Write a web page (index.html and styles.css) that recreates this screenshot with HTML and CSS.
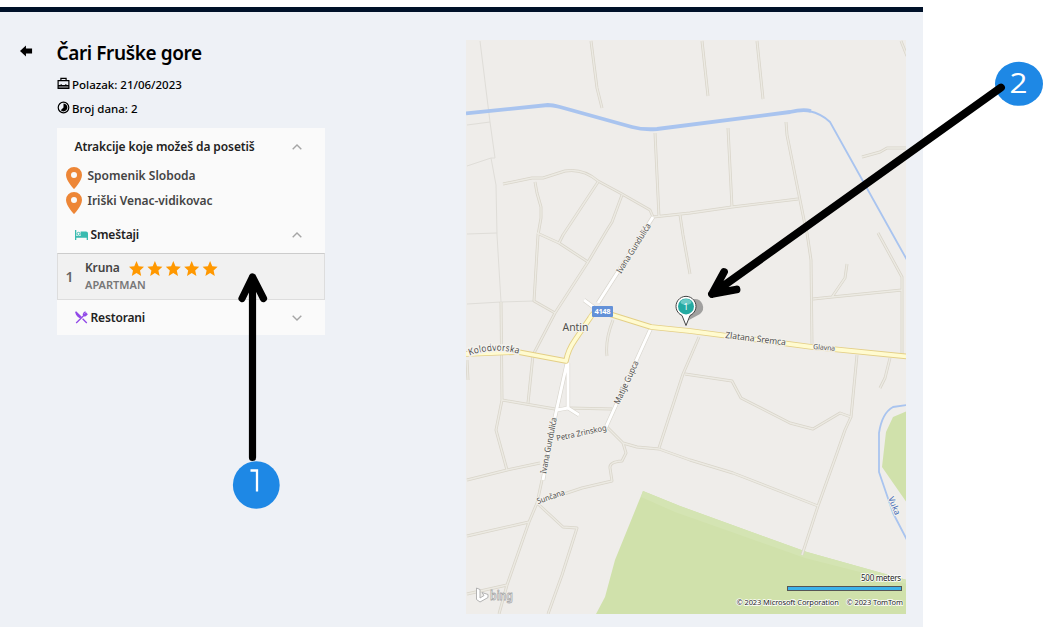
FILE: index.html
```html
<!DOCTYPE html>
<html lang="sr">
<head>
<meta charset="utf-8">
<title>Čari Fruške gore</title>
<link rel="stylesheet" href="styles.css">
</head>
<body>
<main class="app">
  <section class="trip">
    <svg class="back" viewBox="0 0 14 12"><path d="M0 6 6.4 0v3.4H13v5.2H6.4V12z"/></svg>
    <div class="details">
      <h1 class="title"><span class="fit-title">Čari Fruške gore</span></h1>
      <div class="meta">
        <svg class="meta-icon" viewBox="0 0 14 14"><path d="M4.2 4V1.4h5.6V4M1.2 4h11.6v8.3H1.2zM1.2 9.3h11.6M4.5 7.8v1.5M9.5 7.8v1.5" fill="none" stroke="#000" stroke-width="1.3"/><path d="M1 9h12v3H1z" opacity=".45"/></svg>
        <span class="departure">Polazak: 21/06/2023</span>
      </div>
      <div class="meta">
        <svg class="meta-icon" viewBox="0 0 14 14"><circle cx="7" cy="7" r="5.7" fill="none" stroke="#000" stroke-width="1.3"/><path d="M7 2.8a4.2 4.2 0 1 1-3 7.2L7 7z"/></svg>
        <span class="days">Broj dana: 2</span>
      </div>
      <div class="accordion">
        <div class="head head-first"><span class="attractions">Atrakcije koje možeš da posetiš</span><svg class="chev" viewBox="0 0 10 6"><path d="M.7 5.3 5 1l4.3 4.3"/></svg></div>
        <div class="place"><svg class="pin" viewBox="0 0 16 22"><path d="M8 0a8 8 0 0 0-8 8c0 6 8 14 8 14s8-8 8-14a8 8 0 0 0-8-8zm0 4.9a3 3 0 1 1 0 6 3 3 0 0 1 0-6z"/></svg><span class="place-a">Spomenik Sloboda</span></div>
        <div class="place"><svg class="pin" viewBox="0 0 16 22"><path d="M8 0a8 8 0 0 0-8 8c0 6 8 14 8 14s8-8 8-14a8 8 0 0 0-8-8zm0 4.9a3 3 0 1 1 0 6 3 3 0 0 1 0-6z"/></svg><span class="place-b">Iriški Venac-vidikovac</span></div>
        <div class="head head-stay">
          <svg class="head-icon" viewBox="0 0 13 10"><path d="M0 0h1.3v6H5.6V1.4H11a2 2 0 0 1 2 2V10h-1.3V7.8H1.3V10H0z" fill="#38bbb0"/><circle cx="3.5" cy="3.8" r="1.5" fill="none" stroke="#38bbb0"/></svg>
          <span class="stay">Smeštaji</span><svg class="chev" viewBox="0 0 10 6"><path d="M.7 5.3 5 1l4.3 4.3"/></svg></div>
        <div class="hotel">
          <span class="number">1</span>
          <div class="hotel-info">
            <div class="hotel-line"><span class="hotel-name">Kruna</span>
              <svg class="stars" viewBox="0 0 89 15"><defs><path id="star" d="M7.5 0 9.7 5.2 15 5.7 11 9.4 12.2 15 7.5 12 2.8 15 4 9.4 0 5.7 5.3 5.2z"/></defs><use href="#star"/><use href="#star" x="18.4"/><use href="#star" x="36.8"/><use href="#star" x="55.2"/><use href="#star" x="73.6"/></svg></div>
            <span class="hotel-type">APARTMAN</span>
          </div>
        </div>
        <div class="head head-food">
          <svg class="head-icon food" viewBox="0 0 13 13"><path d="M.7.8 6 6M7.6 7.7l4.2 4.3M1.2 12 8.8 4.5M8.2 2.8 10.5.6M9.2 4 11.5 1.7M10.2 5 12.4 2.8M8 3l2 2.2" fill="none" stroke="#9148e8" stroke-width="1.3"/><path d="M.5.5C0 3 2 6 5 7.3L6.6 6z" fill="#9148e8"/></svg>
          <span class="food-name">Restorani</span><svg class="chev" viewBox="0 0 10 6"><path d="M.7.7 5 5 9.3.7"/></svg></div>
      </div>
    </div>
  </section>
  <svg class="map" viewBox="466 40 440 574">
    <defs>
      <g id="lanes">
        <path d="M591 41 597 88 602 108M702 41 708 96M757 41 763 99M728 128 732 207M901 41 907 56M862 157 880 152 887 148H907"/>
        <path d="M786 122 787 135 799 195 805 225 807 233 811 260 812 345M655 133 659 217M653 217 690 213 732 207 798 199M680 215 683 235 690 274"/>
        <path d="M503 184 532 178 543 178 565 171Q583 168 598 181L622 194 650 210 653 217M535 182 537 193 541 207 541 218 538 235 534 301 555 313M598 182 563 235 559 243M622 195 612 222 607 230 588 262 555 313 533 355 528 403M537 233 559 243 588 262"/>
        <path d="M501 302 502 400 496 430 507 470M502 400 555 409M568 408 612 409M613 320Q605 340 607 356M467 360 468 380M878 233 902 277 902 355M813 299 832 297 902 290M832 297 845 278 847 264"/>
        <path d="M699 337 683 374 659 448M685 374 732 381 741 398 790 423 813 429 840 413 851 417M857 355 851 417 845 430 837 453 818 506 802 555M890 358 885 378 880 388"/>
        <path d="M607 427 617 437 623 443 637 447 659 449 690 460 733 473 818 506M623 443 626 453 622 461Q609 462 610 468L612 481 582 488 537 503 563 527 577 528 562 575 548 614M467 480 507 470 540 463M467 536 529 522M467 594 507 585M542 480 537 503 529 522 507 585 499 614"/>
      </g>
      <path id="streets" d="M653 217 598 303M584 300 596 309M651 328 606 427M567 363 555 417 543 480M568 363 568 408 579 415M557 410 568 408"/>
      <path id="highway" d="M466 354 518 352 566 361Q568 350 575 340L590 318Q595 309 603 312L651 327 690 331 812 347 907 356.5"/>
      <path id="kolodvorska" d="M469.5 355.5Q494 346.5 519 354"/>
    </defs>
    <rect x="466" y="40" width="441" height="574" fill="#efedea"/>
    <path d="M643 491 680 506 807 552 907 580V614H596L605 597 615 560zM907 411 893 417 886 432 882 467 907 503z" fill="#d0e1ab"/>
    <path d="M643 491 680 506 807 552 907 580V584L805 558 675 512 641 497z" fill="#d4e4b3"/>
    <path class="border" d="M480 41 490 122 495 158 491 158 496 185 497 235 501 302M467 125 490 122M467 166 491 158M467 234 497 233M467 304 501 302 534 301"/>
    <path class="river" d="M466 113.3 548 105Q552 105 560 107L632 127Q643 130 657 129L790 112Q803 109 811 111" stroke-width="3.8"/>
    <path class="river" d="M809 111Q822 114 830 122L893 235 907 260M907 405 893 407Q882 413 879 433V472L893 513 907 540" stroke-width="1.8"/>
    <use href="#lanes" class="lane-edge"/><use href="#lanes" class="lane-core"/>
    <use href="#streets" class="street-edge"/><use href="#streets" class="street-core"/>
    <use href="#highway" class="highway-edge"/><use href="#highway" class="highway-core"/>
    <g class="street-name">
      <text font-size="9.3" stroke-width="3"><textPath href="#kolodvorska" textLength="50" lengthAdjust="spacingAndGlyphs">Kolodvorska</textPath></text>
      <text transform="translate(621 274) rotate(-58)" textLength="57" lengthAdjust="spacingAndGlyphs" font-size="8.5">Ivana Gundulića</text>
      <text transform="translate(619 405) rotate(-65)" textLength="47" lengthAdjust="spacingAndGlyphs" font-size="8.5">Matije Gupca</text>
      <text transform="translate(546 474) rotate(-79)" textLength="57" lengthAdjust="spacingAndGlyphs" font-size="8.5">Ivana Gundulića</text>
      <text transform="translate(557 441) rotate(-12)" textLength="51" lengthAdjust="spacingAndGlyphs" font-size="8">Petra Zrinskog</text>
      <text transform="translate(538 504) rotate(-19)" textLength="29" lengthAdjust="spacingAndGlyphs" font-size="8">Sunčana</text>
      <text transform="translate(725 338) rotate(7)" textLength="61" lengthAdjust="spacingAndGlyphs" font-size="9">Zlatana Sremca</text>
      <text transform="translate(813 349) rotate(5)" textLength="22" lengthAdjust="spacingAndGlyphs" font-size="7.2">Glavna</text>
      <text x="562.5" y="330.5" textLength="26" lengthAdjust="spacingAndGlyphs" font-size="10">Antin</text>
      <text class="water-name" transform="translate(888 498) rotate(68)" textLength="19" lengthAdjust="spacingAndGlyphs" font-size="8.5">Vuka</text>
    </g>
    <rect x="592" y="306" width="21" height="11" rx="1" fill="#6391d8"/>
    <text x="594.5" y="314.3" textLength="16" font-size="7.5" font-weight="700" fill="#fff">4148</text>
    <path d="M689 320 700 314A8.5 8.5 0 0 0 694 299z" fill="#777" opacity=".65"/>
    <path d="M686 325.5 682 315.5A10 10 0 1 1 690 315.5z" fill="#fff" stroke="#444" stroke-width="1"/>
    <circle cx="686" cy="306.4" r="8" fill="#24aaa2"/><ellipse cx="686" cy="302" rx="5.5" ry="3" fill="#6bcac5"/>
    <text x="683.6" y="309.8" font-size="8.5" fill="#fff">1</text>
    <g fill="#fff" stroke="#aaa" stroke-width=".9"><path d="M476.5 588 480 589.5V598L484 595.5 482 592.5 488 594.5V597.5L480 602 476.5 599.5z"/><text x="490" y="599.5" textLength="23" lengthAdjust="spacingAndGlyphs" font-size="13" font-weight="600">bing</text></g>
    <g class="legal"><text x="861" y="580.5">500 meters</text><text x="736.5" y="604.5" class="owner">© 2023 Microsoft Corporation</text><text x="846.5" y="604.5" class="owner">© 2023 TomTom</text></g>
    <rect x="787.5" y="586.5" width="114" height="4" fill="#3bb2ea" stroke="#555"/>
  </svg>
</main>
<svg class="callouts" viewBox="0 0 1051 627">
  <ellipse cx="256.3" cy="485" rx="23.4" ry="23.7" fill="#1e88e5"/>
  <path d="M252.5 457.5V277M242 298.5 252.5 277 263.5 298.5" class="arrow"/>
  <path d="M250.5 470.5H257V491.5" fill="none" stroke="#fff" stroke-width="2.3"/>
  <ellipse cx="1019" cy="83.8" rx="24" ry="22" fill="#1e88e5"/>
  <path d="M1001 87.5 712 294M724 272 712 294 736.5 289.5" class="arrow arrow-wide"/>
  <text x="1009.5" y="93" textLength="18" lengthAdjust="spacingAndGlyphs" class="callout-number">2</text>
</svg>
</body>
</html>
```
FILE: styles.css
```css
* { box-sizing: border-box; }
body { margin: 0; width: 1051px; height: 627px; overflow: hidden; background: #fff; padding-top: 7px; font-family: "Noto Sans", "Open Sans", sans-serif; }
.app { display: flex; justify-content: space-between; width: 923px; height: 620px; padding: 28px 17px 13px 20px; background: #eef1f6; border-top: 5px solid #001129; }
.trip { display: flex; gap: 23.5px; }
.back { width: 13px; height: 12px; margin-top: 5px; }
.details { width: 268px; }
.title { margin: 0 0 6px; font-size: 19px; line-height: 26px; font-weight: 600; white-space: nowrap; }
.fit-title { letter-spacing: -.4px; }
.meta { display: flex; align-items: center; gap: 3px; height: 24px; font-size: 11.5px; font-weight: 500; white-space: nowrap; }
.meta-icon { width: 13px; height: 13px; margin-bottom: 1px; }
.departure, .days { margin-left: -.5px; }
.accordion { margin-top: 8px; height: 207px; background: #fafafa; color: #222; font-size: 12px; font-weight: 600; white-space: nowrap; }
.attractions { letter-spacing: -.1px; }
.place-b { letter-spacing: -.05px; }
.stay, .food-name { letter-spacing: -.15px; }
.head { display: flex; align-items: center; padding: 0 23px 0 18px; height: 36px; }
.head-first { height: 37.5px; }
.head-icon { width: 13px; height: 10px; margin-right: 3px; }
.food { height: 13px; }
.chev { width: 10px; height: 6px; margin-left: auto; fill: none; stroke: #a5a5a5; stroke-width: 1.4; }
.place { display: flex; align-items: flex-start; gap: 6px; height: 25.5px; padding: 1px 0 0 9px; line-height: 18px; color: #444; }
.pin { width: 16px; height: 22px; fill: #ed8637; }
.hotel { display: flex; align-items: center; gap: 12px; height: 47px; padding-left: 8px; background: #f1f1f1; border: 1px solid #ddd; border-top-color: #ccc; color: #444; }
.number { width: 8px; font-size: 14px; color: #666; }
.hotel-info { line-height: 16px; margin-left: -.5px; }
.hotel-line { display: flex; align-items: center; gap: 9px; height: 17px; }
.hotel-name { letter-spacing: -.15px; }
.stars { width: 89px; height: 15px; fill: #ff9800; }
.hotel-type { display: block; font-size: 11px; color: #777; }
.map { width: 440px; height: 574px; font-family: "Noto Sans", "Open Sans", sans-serif; }
.map path, .map use { stroke-linejoin: round; }
.border { fill: none; stroke: #dfddd8; stroke-width: 1; }
.river { fill: none; stroke: #a9c4ef; }
.lane-edge { fill: none; stroke: #d9d5ca; stroke-width: 2.9; }
.lane-core { fill: none; stroke: #eceae3; stroke-width: 1.4; }
.street-edge { fill: none; stroke: #d8d5cd; stroke-width: 4.2; }
.street-core { fill: none; stroke: #fff; stroke-width: 3; }
.highway-edge { fill: none; stroke: #e4cf86; stroke-width: 5.6; }
.highway-core { fill: none; stroke: #fffbd0; stroke-width: 3.8; }
.street-name { fill: #505050; stroke: #f4f2ed; stroke-width: 2; paint-order: stroke; }
.water-name { fill: #3d68b5; }
.legal { font-size: 8px; fill: #222; stroke: #fff; stroke-width: 1.5; paint-order: stroke; letter-spacing: -.25px; }
.owner { font-size: 7.5px; letter-spacing: -.1px; }
.callouts { position: absolute; left: 0; top: 0; width: 1051px; height: 627px; }
.arrow { fill: none; stroke: #000; stroke-width: 7.2; stroke-linecap: round; stroke-linejoin: round; }
.arrow-wide { stroke-width: 7.8; }
.callout-number { font-family: "Open Sans", sans-serif; font-size: 28px; fill: #fff; }
```
